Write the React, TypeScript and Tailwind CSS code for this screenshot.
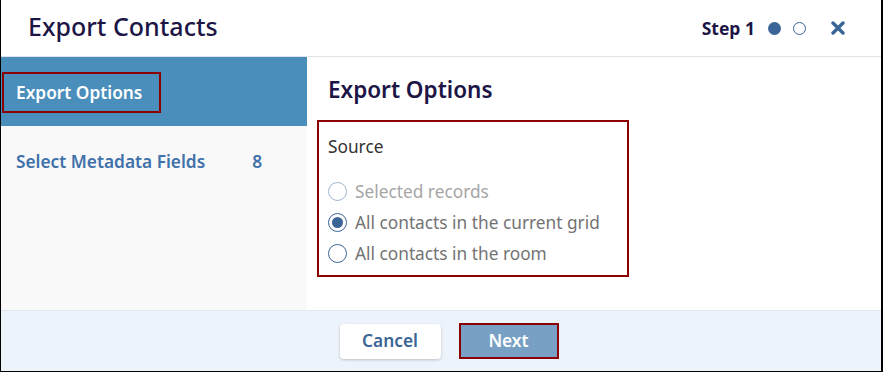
import React from "react";

function Radio({ checked, disabled }: { checked?: boolean; disabled?: boolean }) {
  return (
    <span
      className={`flex h-[19px] w-[19px] shrink-0 items-center justify-center rounded-full border bg-white ${
        disabled ? "border-[#9fb6d0]" : "border-[#3a6596]"
      }`}
    >
      {checked && <span className="h-[11px] w-[11px] rounded-full bg-[#3a6596]" />}
    </span>
  );
}

export default function App() {
  return (
    <div
      className="h-[373px] w-[884px] bg-white"
      style={{ fontFamily: '"Noto Sans", "Open Sans", sans-serif' }}
    >
      <div className="flex h-[372px] w-[883px] flex-col border-b border-l border-r-2 border-black bg-white">
        {/* Header */}
        <div className="flex h-[57px] shrink-0 items-center border-b border-[#dfe4ea] pl-[27px] pr-[36px]">
          <h1 className="mb-[4px] text-[25px] font-medium leading-none text-[#1c1546]">Export Contacts</h1>
          <div className="ml-auto flex items-center">
            <span className="text-[17.5px] font-bold text-[#1c1546]">Step 1</span>
            <span className="ml-[13px] h-[13px] w-[13px] rounded-full bg-[#3a6596]" />
            <span className="ml-[12px] h-[13px] w-[13px] rounded-full border-[1.5px] border-[#3a6596]" />
            <svg className="ml-[25px]" width="14" height="14" viewBox="0 0 14 14">
              <path d="M2 2 L12 12 M12 2 L2 12" stroke="#3a6596" strokeWidth="3.4" strokeLinecap="round" />
            </svg>
          </div>
        </div>

        {/* Body */}
        <div className="flex flex-1">
          <div className="w-[306px] shrink-0 bg-[#f9f9f9]">
            <div className="flex h-[69px] items-center bg-[#4a8ebc] pl-[1px]">
              <div className="mt-[2px] flex h-[41px] items-center border-2 border-[#8b0000] pl-[12px] pr-[17px] text-[17.3px] font-semibold text-white">
                Export Options
              </div>
            </div>
            <div className="flex items-center pl-[15px] pt-[23px] text-[17.3px] font-semibold text-[#3f71aa]">
              <span>Select Metadata Fields</span>
              <span className="ml-[47px]">8</span>
            </div>
          </div>
          <div className="flex-1 pl-[10px] pt-[16px]">
            <h2 className="pl-[11px] text-[22.5px] font-semibold text-[#1c1546]">Export Options</h2>
            <div className="mt-[13px] h-[157px] w-[312px] border-2 border-[#8b0000] pl-[9px] pt-[12px]">
              <div className="text-[17.3px] text-[#333333]">Source</div>
              <div className="mt-[20px] flex flex-col gap-[7px] text-[17.3px] leading-[24px]">
                <label className="flex items-center gap-[8px] text-[#a6a6a6]">
                  <Radio disabled />
                  Selected records
                </label>
                <label className="flex items-center gap-[8px] text-[#737373]">
                  <Radio checked />
                  All contacts in the current grid
                </label>
                <label className="flex items-center gap-[8px] text-[#737373]">
                  <Radio />
                  All contacts in the room
                </label>
              </div>
            </div>
          </div>
        </div>

        {/* Footer */}
        <div className="flex h-[61px] shrink-0 items-center justify-center gap-[18px] border-t border-[#e3e7ec] bg-[#edf3fa] pl-[16px]">
          <button className="h-[35px] w-[101px] rounded-[4px] bg-white text-[17.3px] font-semibold text-[#3a6596] shadow-[0_1px_3px_rgba(0,0,0,0.2)]">
            Cancel
          </button>
          <button className="h-[36px] w-[100px] border-2 border-[#8b0000] bg-[#789fc4] text-[17.3px] font-semibold text-white">
            Next
          </button>
        </div>
      </div>
    </div>
  );
}
